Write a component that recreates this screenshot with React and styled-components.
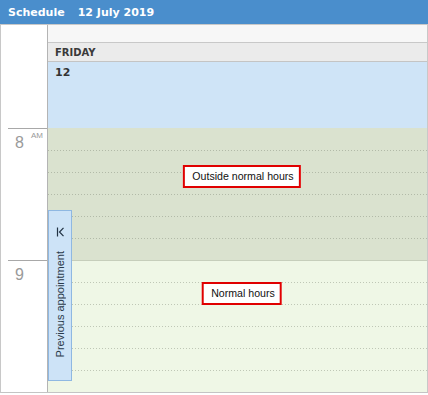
import React from 'react';
import styled, { createGlobalStyle } from 'styled-components';

const GlobalStyle = createGlobalStyle`
  html, body {
    margin: 0;
    padding: 0;
    background: #ffffff;
  }
`;

const SLOT = 22;

const Frame = styled.div`
  width: 428px;
  display: flex;
  flex-direction: column;
  font-family: "Liberation Sans", Arial, sans-serif;
`;

const Header = styled.div`
  height: 24px;
  background: #4a8ecc;
  border-bottom: 1px solid #c8c8c8;
  display: flex;
  align-items: center;
  gap: 13px;
  padding-left: 8px;
  color: #ffffff;
  font-family: "DejaVu Sans", Verdana, sans-serif;
  font-weight: bold;
  font-size: 11px;
`;

const Body = styled.div`
  display: grid;
  grid-template-columns: 47px 1fr;
  border-left: 1px solid #c8c8c8;
  border-right: 1px solid #c8c8c8;
  border-bottom: 1px solid #c4c4c4;
`;

const TimeCol = styled.div`
  display: flex;
  flex-direction: column;
  background: #ffffff;
  border-right: 1px solid #b4b4b4;
`;

const TimeSpacer = styled.div`
  height: 103px;
`;

const HourLabel = styled.div`
  height: ${SLOT * 6 - 1}px;
  margin-left: 7px;
  border-top: 1px solid #a8a8a8;
  display: flex;
  align-items: flex-start;
  padding-left: 7px;
  color: #9a9a9a;
`;

const HourNum = styled.span`
  font-size: 16px;
  line-height: 16px;
  margin-top: 6px;
`;

const Meridiem = styled.span`
  font-size: 8px;
  line-height: 8px;
  margin-top: 3px;
  margin-left: 7px;
`;

const DayCol = styled.div`
  position: relative;
  display: flex;
  flex-direction: column;
`;

const TopStrip = styled.div`
  height: 17px;
  background: #f7f7f7;
  border-bottom: 1px solid #c8c8c8;
`;

const DayHeader = styled.div`
  height: 18px;
  background: #ebebeb;
  border-bottom: 1px solid #c4c4c4;
  display: flex;
  align-items: center;
  padding-left: 7px;
  font-family: "DejaVu Sans", Verdana, sans-serif;
  font-weight: bold;
  font-size: 10px;
  color: #3a3a3a;
`;

const AllDay = styled.div`
  height: 66px;
  background: #cfe4f7;
  padding: 4px 7px 0;
  box-sizing: border-box;
  font-family: "DejaVu Sans", Verdana, sans-serif;
  font-weight: bold;
  font-size: 11px;
  color: #333333;
`;

const HourBlock = styled.div`
  position: relative;
  display: flex;
  flex-direction: column;
  background: ${p => p.$bg};
  border-top: ${p => (p.$line ? `1px solid ${p.$line}` : 'none')};
`;

const Slot = styled.div`
  height: ${SLOT}px;
  box-sizing: border-box;
  background-image: ${p =>
    p.$dotted ? `linear-gradient(to right, ${p.$dot} 1px, transparent 1px)` : 'none'};
  background-size: 3px 1px;
  background-repeat: repeat-x;
  background-position: 0 0;
  &:first-child {
    height: ${p => (p.$short ? SLOT - 1 : SLOT)}px;
  }
`;

const Note = styled.div`
  position: absolute;
  left: 50%;
  top: ${p => p.$top}px;
  transform: translateX(-50%);
  margin-left: 4px;
  background: #ffffff;
  border: 2px solid #e00000;
  padding: 3px 5px 3px 8px;
  font-size: 10.6px;
  line-height: 13px;
  color: #111111;
  white-space: nowrap;
`;

const PrevTab = styled.div`
  position: absolute;
  left: 0;
  top: 185px;
  width: 24px;
  height: 171px;
  box-sizing: border-box;
  background: #cde3f7;
  border: 1px solid #8fb8e2;
  display: flex;
  flex-direction: column;
  align-items: center;
  padding-top: 16px;
  gap: 14px;
  overflow: hidden;
`;

const TabText = styled.span`
  writing-mode: vertical-rl;
  transform: rotate(180deg);
  font-size: 11px;
  line-height: 12px;
  color: #2a3a4a;
  white-space: nowrap;
`;

function FirstIcon() {
  return (
    <svg width="9" height="10" viewBox="0 0 9 10">
      <path d="M1.5 0.5V9.5" stroke="#223344" strokeWidth="1.2" fill="none" />
      <path d="M7.5 0.8L3.5 5L7.5 9.2" stroke="#223344" strokeWidth="1.2" fill="none" />
    </svg>
  );
}

function Hour({ bg, line, dot, note, noteTop }) {
  return (
    <HourBlock $bg={bg} $line={line}>
      {[0, 1, 2, 3, 4, 5].map(i => (
        <Slot key={i} $dotted={i > 0} $dot={dot} $short={!!line} />
      ))}
      <Note $top={noteTop}>{note}</Note>
    </HourBlock>
  );
}

export default function App() {
  return (
    <>
      <GlobalStyle />
      <Frame>
        <Header>
          <span>Schedule</span>
          <span>12 July 2019</span>
        </Header>
        <Body>
          <TimeCol>
            <TimeSpacer />
            <HourLabel>
              <HourNum>8</HourNum>
              <Meridiem>AM</Meridiem>
            </HourLabel>
            <HourLabel>
              <HourNum>9</HourNum>
            </HourLabel>
          </TimeCol>
          <DayCol>
            <TopStrip />
            <DayHeader>FRIDAY</DayHeader>
            <AllDay>12</AllDay>
            <Hour bg="#dae2cf" dot="#b2baa8" note="Outside normal hours" noteTop={37} />
            <Hour bg="#eff7e6" line="#c6cebb" dot="#bfc7b6" note="Normal hours" noteTop={21} />
            <PrevTab>
              <FirstIcon />
              <TabText>Previous appointment</TabText>
            </PrevTab>
          </DayCol>
        </Body>
      </Frame>
    </>
  );
}
